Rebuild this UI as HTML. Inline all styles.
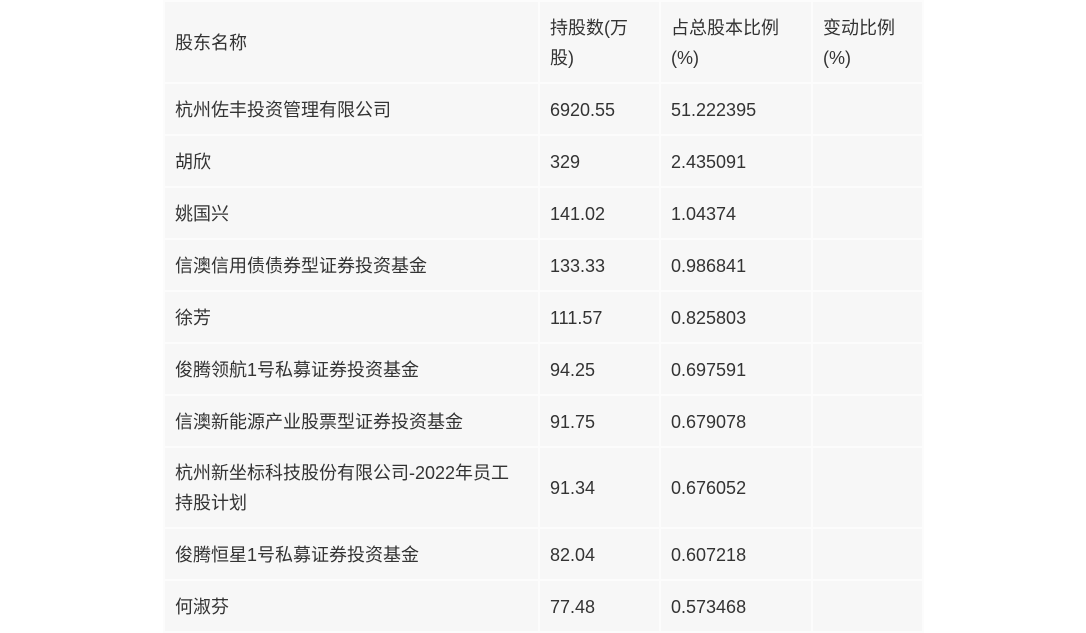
<!DOCTYPE html>
<html><head><meta charset="utf-8"><style>
html,body{margin:0;padding:0;background:#fff;width:1086px;height:632px;overflow:hidden}
table{position:absolute;left:163px;top:0;border-collapse:collapse;font-family:"Liberation Sans","Noto Sans CJK SC",sans-serif;font-size:18px;color:#333;background:#f7f7f7}
td{border:2px solid #fcfcfc;padding:1px 10px 0;height:48px;line-height:30px;vertical-align:middle;box-sizing:border-box}
td.n{padding-right:24px}
</style></head><body>
<table>
<colgroup><col style="width:375px"><col style="width:121px"><col style="width:152px"><col style="width:111px"></colgroup>
<tr style="height:82px"><td class="n">股东名称</td><td>持股数(万股)</td><td>占总股本比例(%)</td><td>变动比例(%)</td></tr>
<tr style="height:52px"><td class="n">杭州佐丰投资管理有限公司</td><td>6920.55</td><td>51.222395</td><td></td></tr>
<tr style="height:52px"><td class="n">胡欣</td><td>329</td><td>2.435091</td><td></td></tr>
<tr style="height:52px"><td class="n">姚国兴</td><td>141.02</td><td>1.04374</td><td></td></tr>
<tr style="height:52px"><td class="n">信澳信用债债券型证券投资基金</td><td>133.33</td><td>0.986841</td><td></td></tr>
<tr style="height:52px"><td class="n">徐芳</td><td>111.57</td><td>0.825803</td><td></td></tr>
<tr style="height:52px"><td class="n">俊腾领航1号私募证券投资基金</td><td>94.25</td><td>0.697591</td><td></td></tr>
<tr style="height:52px"><td class="n">信澳新能源产业股票型证券投资基金</td><td>91.75</td><td>0.679078</td><td></td></tr>
<tr style="height:81px"><td class="n">杭州新坐标科技股份有限公司-2022年员工<br>持股计划</td><td>91.34</td><td>0.676052</td><td></td></tr>
<tr style="height:52px"><td class="n">俊腾恒星1号私募证券投资基金</td><td>82.04</td><td>0.607218</td><td></td></tr>
<tr style="height:52px"><td class="n">何淑芬</td><td>77.48</td><td>0.573468</td><td></td></tr>
</table>
</body></html>
